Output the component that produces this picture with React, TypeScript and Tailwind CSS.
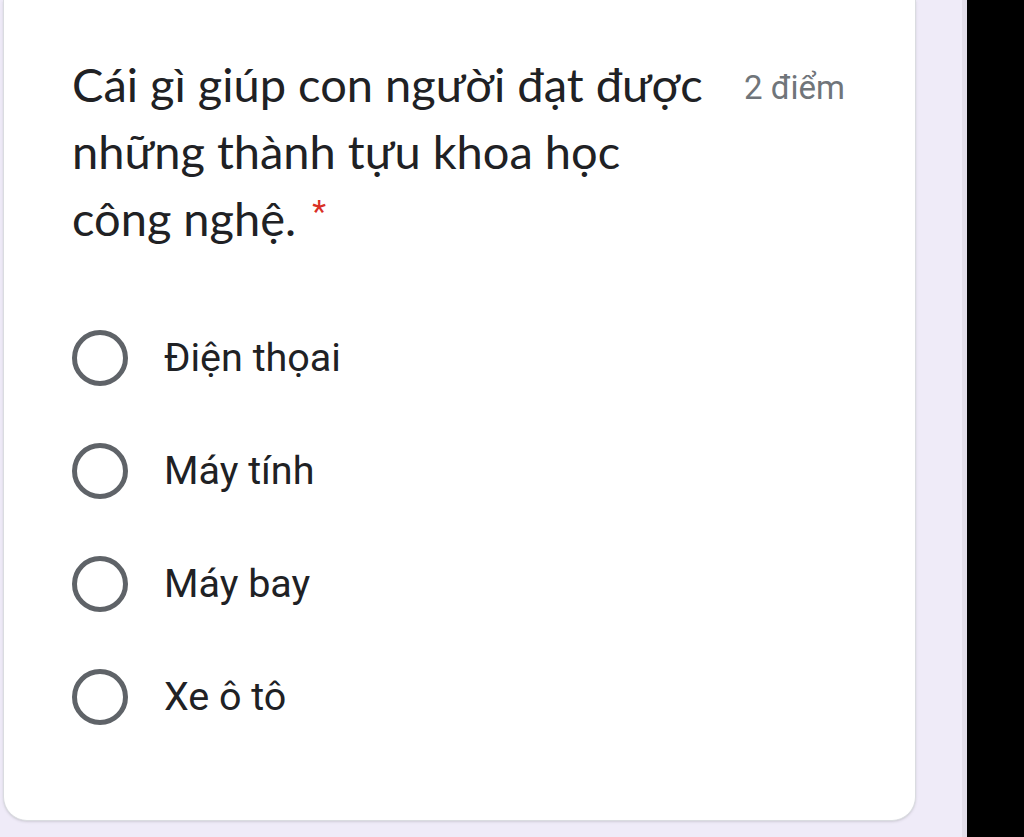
import React from 'react';

const options = ['Điện thọai', 'Máy tính', 'Máy bay', 'Xe ô tô'];

const Radio: React.FC<{ label: string }> = ({ label }) => (
  <label className="flex items-center h-[113px] cursor-pointer">
    <span className="w-[56px] h-[56px] rounded-full border-[5px] border-[#5f6368] shrink-0" />
    <span className="ml-[36px] text-[39.5px] text-[#202124] font-['Roboto',sans-serif]">{label}</span>
  </label>
);

export default function App() {
  return (
    <div className="flex w-[1024px] h-[837px] overflow-hidden bg-black">
      <div className="w-[962px] bg-[#efebf8] pl-[3px]">
        <div className="w-[913px] h-[821px] bg-white border-x border-b border-[#dadce0] rounded-b-[24px] shadow-sm pl-[68px] pr-[70px] pt-[51px]">
          <div className="flex items-start justify-between">
            <h1 className="w-[650px] text-[47px] leading-[67px] text-[#202124] font-['Lato',sans-serif]">
              Cái gì giúp con người đạt được những thành tựu khoa học công nghệ.{' '}
              <span className="inline-block ml-[4px] text-[32px] leading-none align-[14px] text-[#d93025] font-['Roboto',sans-serif]">
                *
              </span>
            </h1>
            <span className="mt-[12px] text-[33px] text-[#70757a] font-['Roboto',sans-serif] whitespace-nowrap">
              2 điểm
            </span>
          </div>
          <div className="mt-[49px]">
            {options.map((o) => (
              <Radio key={o} label={o} />
            ))}
          </div>
        </div>
      </div>
      <div className="w-[5px] bg-[#e2deea]" />
    </div>
  );
}
